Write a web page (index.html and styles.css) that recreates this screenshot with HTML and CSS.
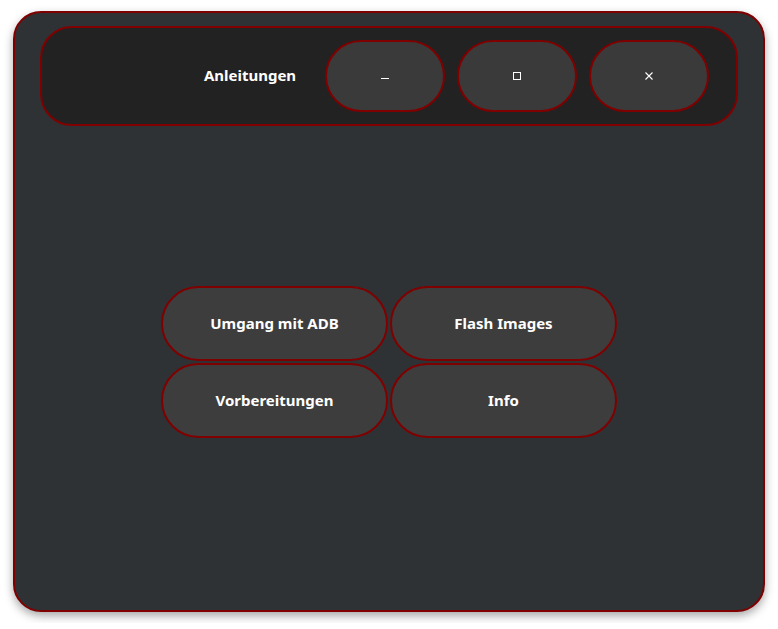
FILE: index.html
```html
<!DOCTYPE html>
<html lang="de">
<head>
    <meta charset="UTF-8">
    <title>Anleitungen</title>
    <link rel="stylesheet" href="styles.css">
</head>
<body>

    <div class="window">

        <div class="titlebar">
            <div class="title">Anleitungen</div>
            <div class="win-btn" title="Minimieren">
                <svg width="10" height="10" viewBox="0 0 10 10"><path d="M1 7.5h8" stroke="#fff" stroke-width="1"/></svg>
            </div>
            <div class="win-btn" title="Maximieren">
                <svg width="10" height="10" viewBox="0 0 10 10"><rect x="1.5" y="1.5" width="7" height="7" fill="none" stroke="#fff" stroke-width="1"/></svg>
            </div>
            <div class="win-btn" title="Schließen">
                <svg width="10" height="10" viewBox="0 0 10 10"><path d="M1.5 1.5l7 7M8.5 1.5l-7 7" stroke="#fff" stroke-width="1.1"/></svg>
            </div>
        </div>

        <div class="content">
            <div class="menu">
                <div class="menu-btn">Umgang mit ADB</div>
                <div class="menu-btn">Flash Images</div>
                <div class="menu-btn">Vorbereitungen</div>
                <div class="menu-btn">Info</div>
            </div>
        </div>

    </div>

</body>
</html>
```

FILE: styles.css
```css
* {box-sizing: border-box}
body {margin: 0; padding: 11px 13px; background: #fff; font: bold 15px "Noto Sans", "Open Sans", sans-serif; color: #fff}

/* ----- Fenster ----- */

.window {
    width: 752px;
    height: 601px;
    background-color: #2e3235;
    border: 2px solid #800000;
    border-radius: 28px;
    padding: 13px 25px;
    display: flex;
    flex-direction: column;
    box-shadow: 0 4px 10px rgba(0, 0, 0, 0.35);
}

.titlebar {
    height: 100px;
    background-color: #222222;
    border: 2px solid #800000;
    border-radius: 32px;
    padding: 0 27px 0 0;
    display: flex;
    align-items: center;
    justify-content: flex-end;
    gap: 12px;
    flex-shrink: 0;
}

.title {
    width: 126px;
    text-align: center;
    margin-bottom: 3px;
}

.win-btn {
    width: 120px;
    height: 72px;
    background-color: #3a3a3a;
    border: 2px solid #800000;
    border-radius: 36px;
    display: flex;
    justify-content: center;
    align-items: center;
}

.win-btn svg {display: block}

/* ----- Menü ----- */

.content {
    flex: 1;
    display: flex;
    justify-content: center;
    align-items: center;
}

.menu {
    display: grid;
    grid-template-columns: 227px 227px;
    grid-auto-rows: 75px;
    gap: 2px;
}

.menu-btn {
    background-color: #3d3d3d;
    border: 2px solid #800000;
    border-radius: 38px;
    display: flex;
    justify-content: center;
    align-items: center;
}
```
